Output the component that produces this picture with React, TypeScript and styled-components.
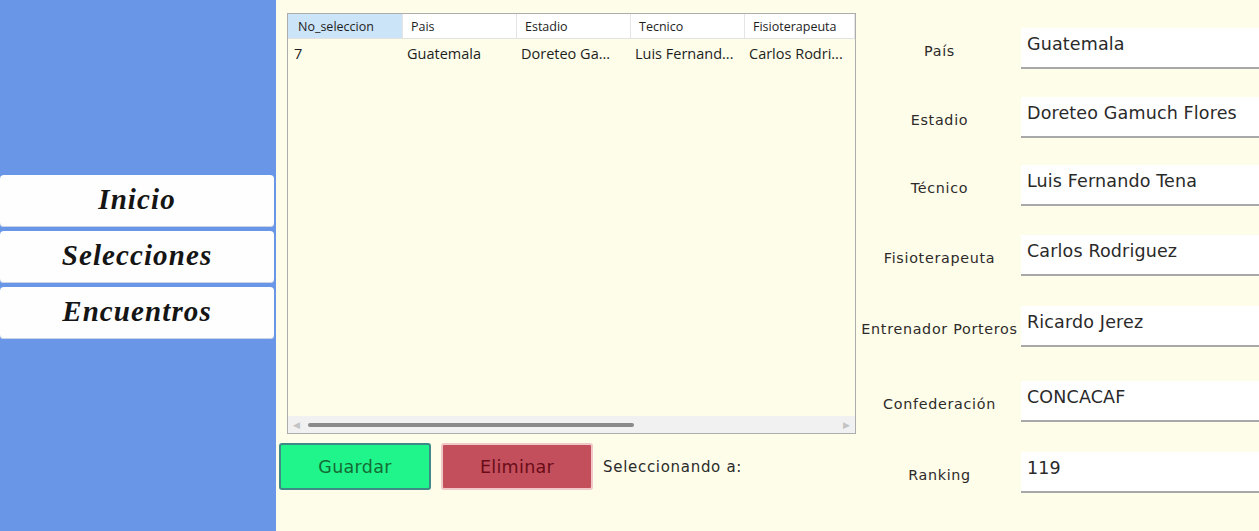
import React from "react";
import styled, { createGlobalStyle } from "styled-components";

const Global = createGlobalStyle`
  html, body { margin: 0; padding: 0; }
  body { width: 1259px; height: 531px; overflow: hidden; background: #fdfde9; }
  * { box-sizing: border-box; }
`;

const Page = styled.div`
  display: flex;
  width: 1259px;
  height: 531px;
  overflow: hidden;
  background: #fdfde9;
`;

const Sidebar = styled.nav`
  width: 276px;
  flex: none;
  background: #6a96e8;
  display: flex;
  flex-direction: column;
  gap: 4px;
  padding-top: 175px;
`;

const NavButton = styled.div`
  width: 274px;
  height: 52px;
  background: #fefefe;
  border-radius: 4px;
  display: flex;
  align-items: center;
  justify-content: center;
  padding-bottom: 3px;
  font-family: "Liberation Serif", serif;
  font-style: italic;
  font-weight: bold;
  font-size: 29px;
  letter-spacing: 1.1px;
  color: #151515;
  box-shadow: inset 0 -1px 0 #c9d3e6;
`;

const Main = styled.main`
  flex: 1;
  display: flex;
  padding: 13px 0 0 11px;
  min-width: 0;
`;

const LeftCol = styled.div`
  width: 569px;
  flex: none;
  display: flex;
  flex-direction: column;
`;

const Grid = styled.div`
  height: 421px;
  border: 1px solid #adadad;
  background: #fdfde9;
  display: flex;
  flex-direction: column;
  font-family: "Open Sans", "Noto Sans", sans-serif;
`;

const HeaderRow = styled.div`
  display: grid;
  grid-template-columns: 115px 114px 114px 114px 1fr;
  height: 25px;
  background: #ffffff;
  border-bottom: 1px solid #e2e2e2;
`;

const HeaderCell = styled.div<{ $active?: boolean }>`
  display: flex;
  align-items: center;
  padding-left: ${(p) => (p.$active ? 10 : 8)}px;
  font-size: 12.5px;
  color: #1e1e1e;
  background: ${(p) => (p.$active ? "#cce4f7" : "#ffffff")};
  border-right: 1px solid #e5e5e5;
  white-space: nowrap;
`;

const BodyRow = styled.div`
  display: grid;
  grid-template-columns: 115px 114px 114px 114px 1fr;
  height: 28px;
`;

const Cell = styled.div<{ $pad: number }>`
  display: flex;
  align-items: center;
  padding-left: ${(p) => p.$pad}px;
  font-size: 14.5px;
  color: #1e1e1e;
  white-space: nowrap;
  overflow: hidden;
`;

const Filler = styled.div`
  flex: 1;
`;

const HScroll = styled.div`
  height: 17px;
  background: #f1f1f1;
  display: flex;
  align-items: center;
  padding: 0 5px;
  gap: 8px;
  color: #c4c4c4;
  font-size: 9px;
  font-family: "DejaVu Sans", sans-serif;
`;

const Track = styled.div`
  flex: 1;
  height: 17px;
  display: flex;
  align-items: center;
`;

const Thumb = styled.div`
  width: 326px;
  height: 4px;
  border-radius: 2px;
  background: #8a8a8a;
`;

const ButtonRow = styled.div`
  display: flex;
  align-items: center;
  margin-top: 9px;
  margin-left: -8px;
`;

const ActionButton = styled.button<{ $bg: string; $border: string; $fg: string }>`
  width: 152px;
  height: 47px;
  background: ${(p) => p.$bg};
  border: 2px solid ${(p) => p.$border};
  border-radius: 3px;
  color: ${(p) => p.$fg};
  font-family: "DejaVu Sans", sans-serif;
  font-size: 17.5px;
  letter-spacing: 0.3px;
  margin-right: 10px;
  padding: 0;
`;

const StatusText = styled.span`
  font-family: "DejaVu Sans", sans-serif;
  font-size: 15px;
  letter-spacing: 0.7px;
  color: #2b2b2b;
  margin-left: 0;
`;

const Form = styled.div`
  display: flex;
  flex-direction: column;
  margin-left: 2px;
`;

const FieldRow = styled.div<{ $top: number }>`
  display: flex;
  align-items: center;
  margin-top: ${(p) => p.$top}px;
`;

const Label = styled.div`
  width: 163px;
  flex: none;
  text-align: center;
  font-family: "DejaVu Sans", sans-serif;
  font-size: 14.3px;
  letter-spacing: 0.7px;
  color: #2e2a2a;
  padding-top: 5px;
  white-space: nowrap;
`;

const Input = styled.div`
  width: 260px;
  height: 41px;
  flex: none;
  background: #ffffff;
  border-bottom: 2px solid #a8a8a8;
  padding: 6px 0 0 6px;
  font-family: "DejaVu Sans", sans-serif;
  font-size: 17.5px;
  letter-spacing: 0.15px;
  color: #2a2a2a;
  white-space: nowrap;
`;

const headers = ["No_seleccion", "Pais", "Estadio", "Tecnico", "Fisioterapeuta"];
const cells = [
  { t: "7", pad: 6 },
  { t: "Guatemala", pad: 4 },
  { t: "Doreteo Ga...", pad: 4 },
  { t: "Luis Fernand...", pad: 4 },
  { t: "Carlos Rodri...", pad: 4 },
];

const fields = [
  { label: "País", value: "Guatemala", top: 15 },
  { label: "Estadio", value: "Doreteo Gamuch Flores", top: 28 },
  { label: "Técnico", value: "Luis Fernando Tena", top: 27 },
  { label: "Fisioterapeuta", value: "Carlos Rodriguez", top: 29 },
  { label: "Entrenador Porteros", value: "Ricardo Jerez", top: 30 },
  { label: "Confederación", value: "CONCACAF", top: 34 },
  { label: "Ranking", value: "119", top: 30 },
];

export default function App() {
  return (
    <>
      <Global />
      <Page>
        <Sidebar>
          <NavButton>Inicio</NavButton>
          <NavButton>Selecciones</NavButton>
          <NavButton>Encuentros</NavButton>
        </Sidebar>
        <Main>
          <LeftCol>
            <Grid>
              <HeaderRow>
                {headers.map((h, i) => (
                  <HeaderCell key={h} $active={i === 0}>
                    {h}
                  </HeaderCell>
                ))}
              </HeaderRow>
              <BodyRow>
                {cells.map((c, i) => (
                  <Cell key={i} $pad={c.pad}>
                    {c.t}
                  </Cell>
                ))}
              </BodyRow>
              <Filler />
              <HScroll>
                <span>◀</span>
                <Track>
                  <Thumb />
                </Track>
                <span>▶</span>
              </HScroll>
            </Grid>
            <ButtonRow>
              <ActionButton $bg="#1ff58a" $border="#3f8a86" $fg="#146b35">
                Guardar
              </ActionButton>
              <ActionButton $bg="#c44f5c" $border="#f0c8c8" $fg="#6a0c18">
                Eliminar
              </ActionButton>
              <StatusText>Seleccionando a:</StatusText>
            </ButtonRow>
          </LeftCol>
          <Form>
            {fields.map((f) => (
              <FieldRow key={f.label} $top={f.top}>
                <Label>{f.label}</Label>
                <Input>{f.value}</Input>
              </FieldRow>
            ))}
          </Form>
        </Main>
      </Page>
    </>
  );
}
